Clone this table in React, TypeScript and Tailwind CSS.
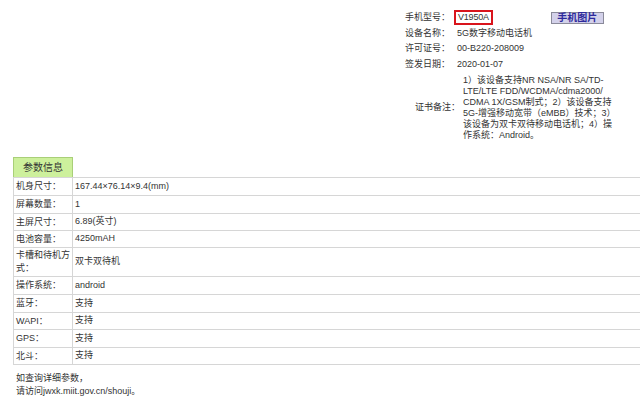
const specs: { label: React.ReactNode; value: string; h: string }[] = [
  { label: "机身尺寸：", value: "167.44×76.14×9.4(mm)", h: "h-[18px]" },
  { label: "屏幕数量：", value: "1", h: "h-[18px]" },
  { label: "主屏尺寸：", value: "6.89(英寸)", h: "h-[17px]" },
  { label: "电池容量：", value: "4250mAH", h: "h-[17px]" },
  { label: <>卡槽和待机方<br />式：</>, value: "双卡双待机", h: "h-[29px]" },
  { label: "操作系统：", value: "android", h: "h-[18px]" },
  { label: "蓝牙：", value: "支持", h: "h-[18px]" },
  { label: "WAPI：", value: "支持", h: "h-[17px]" },
  { label: "GPS：", value: "支持", h: "h-[18px]" },
  { label: "北斗：", value: "支持", h: "h-[17px]" },
];

const info = [
  { label: "设备名称：", value: "5G数字移动电话机" },
  { label: "许可证号：", value: "00-B220-208009" },
  { label: "签发日期：", value: "2020-01-07" },
];

export default function App() {
  return (
    <div className="h-[399px] w-[640px] overflow-hidden bg-white text-[9px] text-[#333] [font-family:'Liberation_Sans','Noto_Sans_CJK_SC',sans-serif]">
      {/* 手机信息 */}
      <div className="pl-[405px] pt-[10px]">
        <div className="flex h-[15.5px] items-center">
          <span className="w-[49px]">手机型号：</span>
          <span className="flex h-[15px] items-center border-2 border-[#d9141c] px-[2px] tracking-[-0.2px]">V1950A</span>
          <button className="ml-[58px] flex h-[12px] w-[53px] items-center justify-center border border-[#8a8a9a] bg-[#d3d1ea] text-[10px] font-bold leading-none text-[#2d2a9c]">
            手机图片
          </button>
        </div>
        {info.map((r) => (
          <div key={r.label} className="flex h-[15.5px] items-center">
            <span className="w-[52px]">{r.label}</span>
            <span>{r.value}</span>
          </div>
        ))}
        <div className="mt-[3px] flex items-center pl-[10px]">
          <span className="w-[48px]">证书备注：</span>
          <div className="leading-[11px]">
            1）该设备支持NR NSA/NR SA/TD-<br />
            LTE/LTE FDD/WCDMA/cdma2000/<br />
            CDMA 1X/GSM制式；2）该设备支持<br />
            5G-增强移动宽带（eMBB）技术；3）<br />
            该设备为双卡双待移动电话机；4）操<br />
            作系统：Android。
          </div>
        </div>
      </div>

      {/* 参数信息 */}
      <div className="mt-[16px]">
        <div className="ml-[13px] flex h-[20px] w-[60px] items-center justify-center border border-b-0 border-[#a9cf78] bg-[#cdf09c] text-[10px]">
          参数信息
        </div>
        <div className="ml-[13px] border-l border-t border-[#d6d6d6]">
          {specs.map((s, i) => (
            <div key={i} className={`flex border-b border-[#d6d6d6] ${s.h}`}>
              <div className="flex w-[59px] shrink-0 items-center border-r border-[#d6d6d6] pl-[2px] leading-[13px]">{s.label}</div>
              <div className="flex items-center pl-[2px]">{s.value}</div>
            </div>
          ))}
        </div>
      </div>

      <div className="mt-[7px] pl-[16px] leading-[13px]">
        如查询详细参数，<br />
        请访问jwxk.miit.gov.cn/shouji。
      </div>
    </div>
  );
}
